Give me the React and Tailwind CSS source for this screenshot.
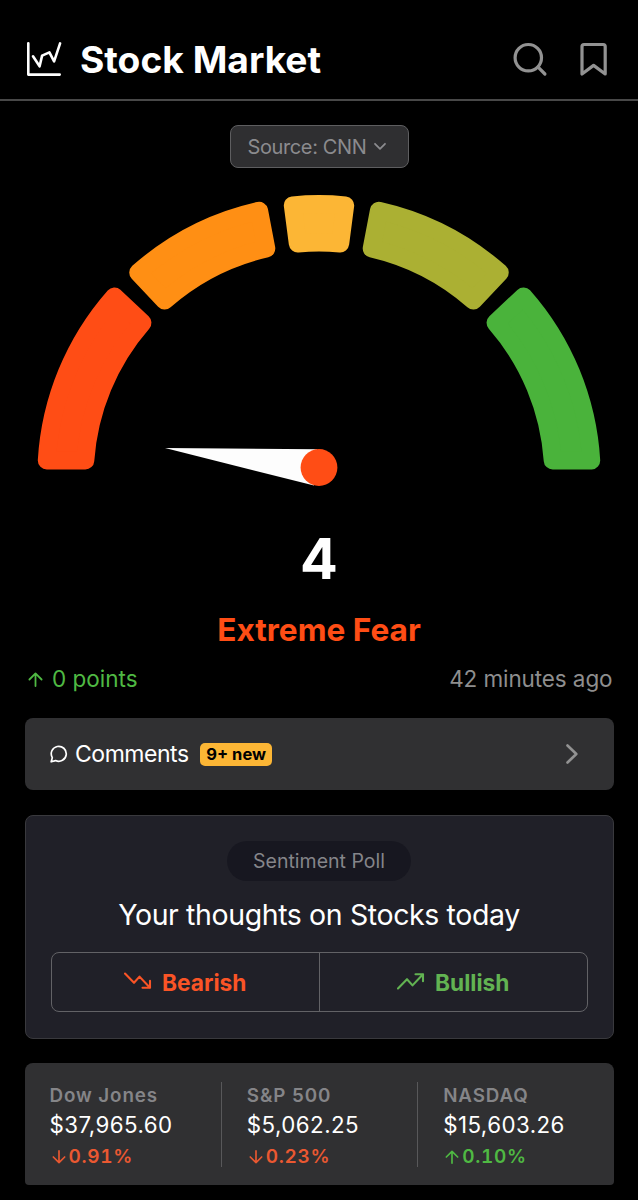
const segments = [
  { color: '#ff4d15', from: 0, to: 43.3 },
  { color: '#ff8f14', from: 46.6, to: 79.2 },
  { color: '#fcb635', from: 82.6, to: 97.4 },
  { color: '#abb033', from: 100.8, to: 133.4 },
  { color: '#4ab33b', from: 136.7, to: 180 },
];

const indexes = [
  { name: 'Dow Jones', price: '$37,965.60', change: '0.91%', up: false },
  { name: 'S&P 500', price: '$5,062.25', change: '0.23%', up: false },
  { name: 'NASDAQ', price: '$15,603.26', change: '0.10%', up: true },
];

const CX = 319;
const CY = 281.8;
const OUTER = 281.7;
const INNER = 225.3;
const CORNER = 9;
const BASE_GAP = 7.3;

// each segment is drawn inset by CORNER, the round stroke then gives the corners
function segmentPath(from, to) {
  const ro = OUTER - CORNER;
  const ri = INNER + CORNER;
  const padFrom = CORNER + (from === 0 ? BASE_GAP : 0);
  const padTo = CORNER + (to === 180 ? BASE_GAP : 0);

  function point(r, deg, pad) {
    const a = (deg * Math.PI) / 180 + Math.asin(pad / r);
    return (CX - r * Math.cos(a)).toFixed(2) + ' ' + (CY - r * Math.sin(a)).toFixed(2);
  }

  return (
    'M' + point(ro, from, padFrom) +
    'A' + ro + ' ' + ro + ' 0 0 1 ' + point(ro, to, -padTo) +
    'L' + point(ri, to, -padTo) +
    'A' + ri + ' ' + ri + ' 0 0 0 ' + point(ri, from, padFrom) + 'Z'
  );
}

function Gauge() {
  return (
    <svg width="638" height="300" viewBox="0 0 638 300" className="block">
      {segments.map(function (s) {
        return (
          <path
            key={s.color}
            d={segmentPath(s.from, s.to)}
            fill={s.color}
            stroke={s.color}
            strokeWidth={CORNER * 2}
            strokeLinejoin="round"
          />
        );
      })}
      <path d="M165 253l152 1.2-3 36.3z" fill="#fdfdfd" />
      <circle cx="319" cy="272.5" r="18.4" fill="#ff4d15" />
    </svg>
  );
}

function Arrow({ up, className }) {
  return (
    <svg viewBox="0 0 16 16" fill="none" stroke="currentColor" strokeWidth="1.9" strokeLinecap="round" strokeLinejoin="round" className={className}>
      <path d={up ? 'M8 15V1.5M1.5 8L8 1.5 14.5 8' : 'M8 1v13.5M1.5 8L8 14.5 14.5 8'} />
    </svg>
  );
}

function Header() {
  return (
    <header className="flex h-[101px] items-start border-b-2 border-[#484848] pt-[40px] pl-[25px]">
      <svg width="38" height="38" viewBox="0 0 38 38" fill="none" stroke="#fff" strokeWidth="2.6" strokeLinecap="round" strokeLinejoin="round">
        <path d="M3.3 3.3v31.3h31.4" />
        <path d="M8 16.3l6.6 10 2.5-10.7 7.3-3.2 4.7 9 6-18" />
      </svg>
      <h1 className="ml-[17px] text-[37.2px] leading-[40px] font-bold whitespace-nowrap text-white">Stock Market</h1>
      <div className="ml-auto flex gap-[27px] pr-[27px]">
        <svg width="38" height="38" viewBox="0 0 38 38" fill="none" stroke="#929292" strokeWidth="3.2" strokeLinecap="round">
          <circle cx="18.3" cy="17.7" r="13.2" />
          <path d="M28.1 27.2l6.8 6.8" />
        </svg>
        <svg width="38" height="38" viewBox="0 0 38 38" fill="none" stroke="#929292" strokeWidth="3.2" strokeLinecap="round" strokeLinejoin="round" className="-mx-[1px]">
          <path d="M8 34V6.5q0-2 2-2h19.2q2 0 2 2V34l-11.6-8.6z" />
        </svg>
      </div>
    </header>
  );
}

function Poll() {
  return (
    <section className="mx-[24.5px] mt-[25px] flex h-[224px] flex-col items-center rounded-[8px] border border-[#39393d] bg-[#202028] px-[25px] pt-[25px]">
      <div className="flex h-[40px] w-[184px] items-center justify-center rounded-full bg-[#171720] pt-[2px] text-[19.5px] text-[#85858a]">
        Sentiment Poll
      </div>
      <h2 className="mt-[16px] text-[28.5px] leading-[36px] tracking-[-0.39px] whitespace-nowrap text-white">Your thoughts on Stocks today</h2>
      <div className="mt-[19px] grid h-[60px] w-full grid-cols-2 rounded-[8px] border border-[#626266]">
        <button type="button" className="flex items-center justify-center pt-[2px] text-[22.7px] font-bold text-[#fa5426]">
          <svg width="28" height="18" viewBox="0 0 28 18" fill="none" stroke="currentColor" strokeWidth="2.1" strokeLinecap="round" strokeLinejoin="round" className="mr-[10px] mb-[4px]">
            <path d="M1 1.5l9 9.3 5.5-6.2L26 15.8M26 8.8v7h-7.5" />
          </svg>
          Bearish
        </button>
        <button type="button" className="flex items-center justify-center border-l border-[#626266] pt-[2px] text-[22.7px] font-bold text-[#62b352]">
          <svg width="28" height="18" viewBox="0 0 28 18" fill="none" stroke="currentColor" strokeWidth="2.1" strokeLinecap="round" strokeLinejoin="round" className="mr-[10px] mb-[4px]">
            <path d="M1 16.5l9-9.3 5.5 6.2L26 2.2M26 9.2v-7h-7.5" />
          </svg>
          Bullish
        </button>
      </div>
    </section>
  );
}

export default function App() {
  return (
    <main className="h-[1200px] w-[638px] overflow-hidden bg-black font-['Inter',sans-serif]">
      <Header />

      <button type="button" className="mx-auto mt-[24px] flex h-[43px] w-[179px] items-center rounded-[8px] border-[1.5px] border-[#5e5e60] bg-[#2f2f31] pl-[17px] text-[20px] tracking-[-0.38px] whitespace-nowrap text-[#8b8b8e]">
        Source: CNN
        <svg width="14" height="9" viewBox="0 0 14 9" fill="none" stroke="currentColor" strokeWidth="1.8" strokeLinecap="round" strokeLinejoin="round" className="ml-[7px]">
          <path d="M2 1.8l5 5 5-5" />
        </svg>
      </button>

      <div className="mt-[27px]">
        <Gauge />
      </div>

      <p className="mt-[34px] h-[60px] text-center text-[56px] leading-[60px] font-bold text-white">4</p>
      <p className="mt-[21px] h-[40px] text-center text-[31.6px] leading-[39px] font-bold text-[#ff4d15]">Extreme Fear</p>

      <div className="mt-[13px] flex h-[32px] items-center justify-between pr-[25.5px] pl-[28px] text-[22.5px]">
        <span className="flex items-center text-[#4fb943]">
          <Arrow up className="mr-[9px] w-[15px]" />
          0 points
        </span>
        <span className="tracking-[-0.1px] text-[#8e8e8e]">42 minutes ago</span>
      </div>

      <section className="mx-[24.5px] mt-[23px] flex h-[72px] items-center rounded-[8px] bg-[#303032] pr-[35px] pl-[25.5px]">
        <svg width="18" height="18" viewBox="0 0 18 18" fill="none" stroke="#fff" strokeWidth="1.7" strokeLinejoin="round">
          <path d="M1.2 16.8l1.1-4.2A7.5 7.5 0 1 1 5.6 15.6z" />
        </svg>
        <span className="ml-[7px] text-[23px] tracking-[-0.46px] text-white">Comments</span>
        <span className="ml-[11.5px] flex h-[23px] w-[72px] items-center justify-center rounded-[5px] bg-[#fcb635] text-[16.5px] font-bold text-black">9+ new</span>
        <svg width="14" height="22" viewBox="0 0 14 22" fill="none" stroke="#929292" strokeWidth="2.6" strokeLinecap="round" strokeLinejoin="round" className="ml-auto">
          <path d="M2.5 2.5l8.8 8.5-8.8 8.5" />
        </svg>
      </section>

      <Poll />

      <section className="mx-[24.5px] mt-[24px] grid h-[122px] grid-cols-3 rounded-t-[8px] rounded-b-[4px] bg-[#303032] pt-[19px]">
        {indexes.map(function (item, i) {
          return (
            <div key={item.name} className={'h-[85px] ' + (i > 0 ? 'border-l border-[#58585a] pl-[25px]' : 'pl-[25px]')}>
              <p className="pt-[1px] text-[18.8px] leading-[26px] font-semibold tracking-[0.9px] text-[#858588]">{item.name}</p>
              <p className="mt-[1px] text-[22.3px] leading-[30px] tracking-[0.45px] text-white">{item.price}</p>
              <p className={'mt-[4px] flex items-center text-[19px] leading-[26px] font-semibold tracking-[0.7px] tabular-nums ' + (item.up ? 'text-[#4fb943]' : 'text-[#ea5831]')}>
                <Arrow up={item.up} className="mr-[3px] ml-[2px] w-[14px]" />
                {item.change}
              </p>
            </div>
          );
        })}
      </section>
    </main>
  );
}
